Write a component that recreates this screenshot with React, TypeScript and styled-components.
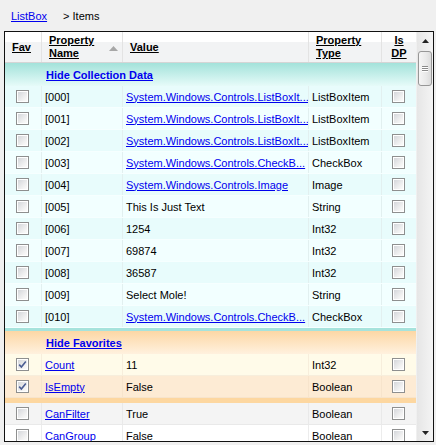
import React from "react";
import styled, { createGlobalStyle } from "styled-components";

const GlobalStyle = createGlobalStyle`
  html, body {
    margin: 0;
    padding: 0;
    background: #f0f0f0;
  }
  body {
    font-family: "Liberation Sans", Arial, sans-serif;
    font-size: 11px;
    color: #000;
  }
`;

const COLS = "37px 81px 186px 73px 35px";

type Tone = "cyanA" | "cyanB" | "favA" | "favB" | "grey" | "white";

const toneBg: Record<Tone, string> = {
  cyanA: "#e8fcfc",
  cyanB: "#f2ffff",
  favA: "#fffbe9",
  favB: "#fdebd4",
  grey: "#f4f4f4",
  white: "#ffffff",
};

const toneLine: Record<Tone, string> = {
  cyanA: "#f6ffff",
  cyanB: "#f6ffff",
  favA: "#f7eedc",
  favB: "#f7e4cc",
  grey: "#e9e9e9",
  white: "#ececec",
};

const Page = styled.div`
  width: 436px;
  height: 445px;
  display: flex;
  flex-direction: column;
`;

const Breadcrumb = styled.div`
  height: 31px;
  display: flex;
  align-items: center;
  gap: 16px;
  padding-left: 11px;
`;

const Link = styled.a<{ $bold?: boolean }>`
  color: #0000ee;
  text-decoration: underline;
  font-weight: ${(p) => (p.$bold ? "bold" : "normal")};
  white-space: nowrap;
  cursor: pointer;
`;

const Frame = styled.div`
  margin-left: 4px;
  width: 430px;
  height: 411px;
  box-sizing: border-box;
  border: 1px solid #111;
  background: #fff;
  display: flex;
  overflow: hidden;
`;

const Grid = styled.div`
  width: 412px;
  display: flex;
  flex-direction: column;
  overflow: hidden;
`;

const HeaderRow = styled.div`
  display: grid;
  grid-template-columns: ${COLS};
  height: 31px;
  flex-shrink: 0;
  box-sizing: border-box;
  border-bottom: 1px solid #d5d5d5;
  background: linear-gradient(#ffffff 0%, #ffffff 32%, #f2f3f4 34%, #f2f3f4 100%);
`;

const HeaderCell = styled.div<{ $center?: boolean }>`
  position: relative;
  display: flex;
  align-items: center;
  justify-content: ${(p) => (p.$center ? "center" : "flex-start")};
  text-align: ${(p) => (p.$center ? "center" : "left")};
  padding-left: ${(p) => (p.$center ? "0" : "7px")};
  border-right: 1px solid #e3e3e3;
  font-weight: bold;
  text-decoration: underline;
  line-height: 13px;
`;

const SortArrow = styled.svg`
  position: absolute;
  right: 4px;
  top: 14px;
`;

const GroupHeader = styled.div<{ $kind: "teal" | "orange" }>`
  height: 23px;
  flex-shrink: 0;
  display: flex;
  align-items: center;
  padding-left: 41px;
  background: ${(p) =>
    p.$kind === "teal"
      ? "linear-gradient(#a3e2da, #e6fbf9)"
      : "linear-gradient(#fcd7a5, #fff1de)"};
`;

const Band = styled.div<{ $kind: "teal" | "orange"; $h: number }>`
  height: ${(p) => p.$h}px;
  flex-shrink: 0;
  background: ${(p) => (p.$kind === "teal" ? "#a6e3dc" : "#fdd7a0")};
`;

const Row = styled.div<{ $tone: Tone }>`
  display: grid;
  grid-template-columns: ${COLS};
  height: 22px;
  flex-shrink: 0;
  box-sizing: border-box;
  background: ${(p) => toneBg[p.$tone]};
  border-bottom: 1px solid ${(p) => toneLine[p.$tone]};
`;

const Cell = styled.div<{ $tone: Tone; $center?: boolean }>`
  display: flex;
  align-items: center;
  justify-content: ${(p) => (p.$center ? "center" : "flex-start")};
  padding-left: ${(p) => (p.$center ? "0" : "3px")};
  border-right: 1px solid ${(p) => (p.$tone.startsWith("cyan") ? "#e2f0f0" : toneLine[p.$tone])};
  overflow: hidden;
  white-space: nowrap;
`;

const Box = styled.span`
  width: 13px;
  height: 13px;
  box-sizing: border-box;
  border: 1px solid #8e8f8f;
  background: #fff;
  padding: 1px;
  display: inline-flex;
  margin-left: -1px;
`;

const BoxInner = styled.span`
  flex: 1;
  background: linear-gradient(135deg, #d5d7db 0%, #f2f2f2 70%, #fbfbfb 100%);
  display: flex;
  align-items: center;
  justify-content: center;
`;

const Scrollbar = styled.div`
  width: 16px;
  display: flex;
  flex-direction: column;
  background: linear-gradient(90deg, #e6e6e6, #f4f4f4);
  border-left: 1px solid #f0f0f0;
`;

const ArrowButton = styled.div`
  height: 17px;
  flex-shrink: 0;
  display: flex;
  align-items: center;
  justify-content: center;
`;

const Track = styled.div`
  flex: 1;
  padding: 2px 1px 0 1px;
`;

const Thumb = styled.div`
  height: 35px;
  box-sizing: border-box;
  border: 1px solid #979797;
  border-radius: 3px;
  background: linear-gradient(90deg, #f6f6f6, #e9e9e9 60%, #dcdcdc);
  display: flex;
  flex-direction: column;
  align-items: center;
  justify-content: center;
  gap: 1px;
`;

const Grip = styled.span`
  width: 6px;
  height: 1px;
  background: #8a8a8a;
  box-shadow: 0 1px 0 #fff;
`;

function CheckBox({ checked }: { checked?: boolean }) {
  return (
    <Box>
      <BoxInner>
        {checked && (
          <svg width="9" height="9" viewBox="0 0 9 9">
            <path d="M1.2 4.6 L3.4 7 L7.8 1.6" fill="none" stroke="#4a5d93" strokeWidth="1.6" />
          </svg>
        )}
      </BoxInner>
    </Box>
  );
}

interface Item {
  name: string;
  value: string;
  type: string;
  nameLink?: boolean;
  valueLink?: boolean;
  fav?: boolean;
}

const collection: Item[] = [
  { name: "[000]", value: "System.Windows.Controls.ListBoxIt...", type: "ListBoxItem", valueLink: true },
  { name: "[001]", value: "System.Windows.Controls.ListBoxIt...", type: "ListBoxItem", valueLink: true },
  { name: "[002]", value: "System.Windows.Controls.ListBoxIt...", type: "ListBoxItem", valueLink: true },
  { name: "[003]", value: "System.Windows.Controls.CheckB...", type: "CheckBox", valueLink: true },
  { name: "[004]", value: "System.Windows.Controls.Image", type: "Image", valueLink: true },
  { name: "[005]", value: "This Is Just Text", type: "String" },
  { name: "[006]", value: "1254", type: "Int32" },
  { name: "[007]", value: "69874", type: "Int32" },
  { name: "[008]", value: "36587", type: "Int32" },
  { name: "[009]", value: "Select Mole!", type: "String" },
  { name: "[010]", value: "System.Windows.Controls.CheckB...", type: "CheckBox", valueLink: true },
];

const favorites: Item[] = [
  { name: "Count", value: "11", type: "Int32", nameLink: true, fav: true },
  { name: "IsEmpty", value: "False", type: "Boolean", nameLink: true, fav: true },
];

const others: Item[] = [
  { name: "CanFilter", value: "True", type: "Boolean", nameLink: true },
  { name: "CanGroup", value: "False", type: "Boolean", nameLink: true },
];

function DataRow({ item, tone }: { item: Item; tone: Tone }) {
  return (
    <Row $tone={tone}>
      <Cell $tone={tone} $center>
        <CheckBox checked={item.fav} />
      </Cell>
      <Cell $tone={tone}>{item.nameLink ? <Link>{item.name}</Link> : item.name}</Cell>
      <Cell $tone={tone}>{item.valueLink ? <Link>{item.value}</Link> : item.value}</Cell>
      <Cell $tone={tone}>{item.type}</Cell>
      <Cell $tone={tone} $center>
        <CheckBox />
      </Cell>
    </Row>
  );
}

export default function App() {
  return (
    <Page>
      <GlobalStyle />
      <Breadcrumb>
        <Link>ListBox</Link>
        <span>&gt; Items</span>
      </Breadcrumb>
      <Frame>
        <Grid>
          <HeaderRow>
            <HeaderCell>Fav</HeaderCell>
            <HeaderCell>
              Property
              <br />
              Name
              <SortArrow width="9" height="5" viewBox="0 0 9 5">
                <path d="M0 5 L4.5 0 L9 5 Z" fill="#a7a7a7" />
              </SortArrow>
            </HeaderCell>
            <HeaderCell>Value</HeaderCell>
            <HeaderCell>
              Property
              <br />
              Type
            </HeaderCell>
            <HeaderCell $center>
              Is
              <br />
              DP
            </HeaderCell>
          </HeaderRow>

          <GroupHeader $kind="teal">
            <Link $bold>Hide Collection Data</Link>
          </GroupHeader>
          {collection.map((it, i) => (
            <DataRow key={it.name} item={it} tone={i % 2 === 0 ? "cyanA" : "cyanB"} />
          ))}
          <Band $kind="teal" $h={3} />

          <GroupHeader $kind="orange">
            <Link $bold>Hide Favorites</Link>
          </GroupHeader>
          {favorites.map((it, i) => (
            <DataRow key={it.name} item={it} tone={i % 2 === 0 ? "favA" : "favB"} />
          ))}
          <Band $kind="orange" $h={5} />

          {others.map((it, i) => (
            <DataRow key={it.name} item={it} tone={i % 2 === 0 ? "grey" : "white"} />
          ))}
        </Grid>
        <Scrollbar>
          <ArrowButton>
            <svg width="7" height="4" viewBox="0 0 7 4">
              <path d="M0 4 L3.5 0 L7 4 Z" fill="#222" />
            </svg>
          </ArrowButton>
          <Track>
            <Thumb>
              <Grip />
              <Grip />
              <Grip />
            </Thumb>
          </Track>
          <ArrowButton>
            <svg width="7" height="4" viewBox="0 0 7 4">
              <path d="M0 0 L3.5 4 L7 0 Z" fill="#222" />
            </svg>
          </ArrowButton>
        </Scrollbar>
      </Frame>
    </Page>
  );
}
